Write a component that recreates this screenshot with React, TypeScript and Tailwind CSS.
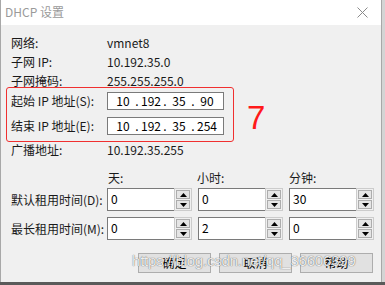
const font = { fontFamily: '"Noto Sans CJK SC", "Liberation Sans", sans-serif' };

const Arrow: React.FC<{ up?: boolean }> = ({ up }) => (
  <svg width="7" height="4" viewBox="0 0 7 4">
    {up ? <polygon points="0,4 7,4 3.5,0" fill="#000" /> : <polygon points="0,0 7,0 3.5,4" fill="#000" />}
  </svg>
);

const Spin: React.FC<{ value: string }> = ({ value }) => (
  <div className="flex h-[23px] w-[85px]">
    <div className="flex flex-1 items-center border-y border-l border-[#7a7a7a] bg-white pl-[3px] pb-[2px] text-black">
      {value}
    </div>
    <div className="flex w-[18px] flex-col gap-[1px] border border-[#cccccc] bg-[#f0f0f0] p-[1px]">
      <div className="flex flex-1 items-center justify-center border border-[#adadad] bg-[#e5e5e5]">
        <Arrow up />
      </div>
      <div className="flex flex-1 items-center justify-center border border-[#adadad] bg-[#e5e5e5]">
        <Arrow />
      </div>
    </div>
  </div>
);

const IpField: React.FC<{ parts: string[] }> = ({ parts }) => (
  <div className="flex h-[18px] w-[117px] items-center border border-[#7a7a7a] bg-white pl-[4px] text-black">
    {parts.map((p, i) => (
      <div key={i} className="flex">
        {i > 0 && <span className="w-[6px] text-center">.</span>}
        <span className="w-[22px] text-center">{p}</span>
      </div>
    ))}
  </div>
);

const Row: React.FC<{ label: string; value: string }> = ({ label, value }) => (
  <div className="flex h-[19px] items-center pl-[10px]">
    <div className="w-[96px]">{label}</div>
    <div>{value}</div>
  </div>
);

export default function App() {
  return (
    <div className="flex h-[285px] w-[385px] flex-col overflow-hidden bg-[#d4d4d4] text-[12px] text-[#1a1a1a]" style={font}>
      <div className="flex h-[282px] w-[382px] flex-col border-x border-[#a8a8a8]">
        <div className="flex h-[25px] items-center justify-between bg-white pl-[4px] pr-[13px] pb-[1px] text-[#9a9a9a]">
          <span>DHCP 设置</span>
          <svg width="11" height="11" viewBox="0 0 11 11">
            <path d="M0.5 0.5 L10.5 10.5 M10.5 0.5 L0.5 10.5" stroke="#8a8a8a" strokeWidth="1" fill="none" />
          </svg>
        </div>
        <div className="relative flex flex-1 flex-col bg-[#f0f0f0] pt-[8px]">
          <Row label="网络:" value="vmnet8" />
          <Row label="子网 IP:" value="10.192.35.0" />
          <Row label="子网掩码:" value="255.255.255.0" />
          <div className="ml-[5px] mt-[-3px] flex w-[228px] flex-col gap-[7px] rounded-[3px] border border-[#f03030] pb-[6px] pl-[4px] pt-[4px]">
            <div className="flex items-center">
              <div className="w-[96px]">起始 IP 地址(S):</div>
              <IpField parts={["10", "192", "35", "90"]} />
            </div>
            <div className="flex items-center">
              <div className="w-[96px]">结束 IP 地址(E):</div>
              <IpField parts={["10", "192", "35", "254"]} />
            </div>
          </div>
          <div className="absolute left-[246px] top-[76px] text-[33px] leading-none text-[#ff1a1a]" style={{ fontFamily: '"Liberation Sans", sans-serif' }}>
            7
          </div>
          <div className="flex h-[16px] items-center pl-[10px]">
            <div className="w-[96px]">广播地址:</div>
            <div>10.192.35.255</div>
          </div>
          <div className="mt-[12px] flex h-[16px] items-center pl-[106px]">
            <div className="w-[90px] pl-[1px]">天:</div>
            <div className="w-[92px]">小时:</div>
            <div className="w-[91px]">分钟:</div>
          </div>
          <div className="mt-[2px] flex items-center pl-[10px]">
            <div className="w-[96px]">默认租用时间(D):</div>
            <div className="flex gap-[6px]">
              <Spin value="0" />
              <Spin value="0" />
              <Spin value="30" />
            </div>
          </div>
          <div className="mt-[6px] flex items-center pl-[10px]">
            <div className="w-[96px]">最长租用时间(M):</div>
            <div className="flex gap-[6px]">
              <Spin value="0" />
              <Spin value="2" />
              <Spin value="0" />
            </div>
          </div>
          <div className="mt-[13px] flex justify-end gap-[8px] pr-[8px]">
            {["确定", "取消", "帮助"].map((b) => (
              <div key={b} className="flex h-[20px] w-[73px] items-center justify-center border border-[#adadad] bg-[#e1e1e1] text-black">
                {b}
              </div>
            ))}
          </div>
          <div
            className="absolute left-[131px] top-[228px] text-[15px] leading-none tracking-[-0.2px] text-white/90 [text-shadow:0_0_1px_rgba(0,0,0,0.8)]"
            style={{ fontFamily: '"Liberation Sans", sans-serif' }}
          >
            https://blog.csdn.net/qq_36606399
          </div>
        </div>
      </div>
      <div className="flex-1 bg-[#5a5a5a]" />
    </div>
  );
}
